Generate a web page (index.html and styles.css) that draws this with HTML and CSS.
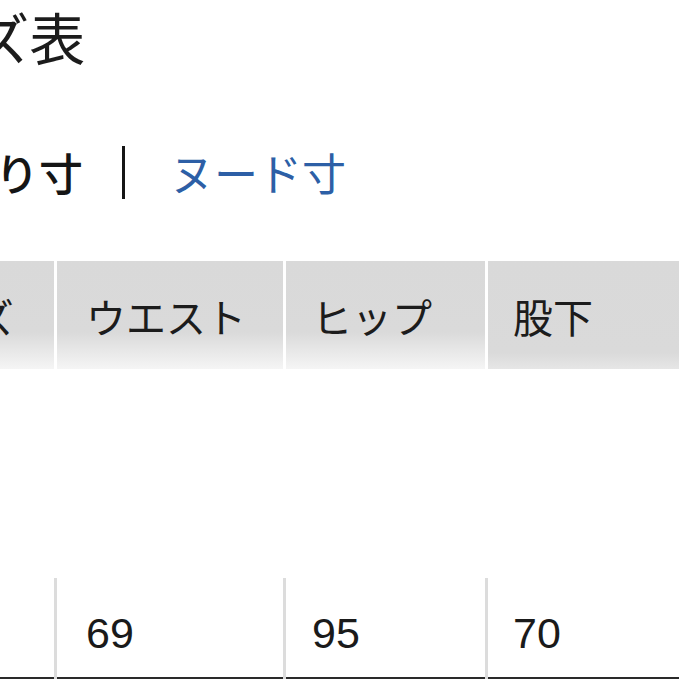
FILE: index.html
```html
<!DOCTYPE html>
<html lang="ja">
<head>
<meta charset="utf-8">
<title>サイズ表</title>
<link rel="stylesheet" href="styles.css">
</head>
<body>
<main class="page">
  <h1 class="title">サイズ表</h1>
  <nav class="tabs">
    <span class="tab tab-active">仕上がり寸</span>
    <span class="tab-sep" aria-hidden="true"></span>
    <a class="tab tab-link" href="#">ヌード寸</a>
  </nav>
  <div class="table">
    <div class="cell head">サイズ</div>
    <div class="cell head">ウエスト</div>
    <div class="cell head col3">ヒップ</div>
    <div class="cell head col4">股下</div>

    <div class="spacer"></div>

    <div class="cell data first"></div>
    <div class="cell data">69</div>
    <div class="cell data col3">95</div>
    <div class="cell data col4">70</div>
  </div>
</main>
</body>
</html>
```

FILE: styles.css
```css
html, body {
  margin: 0;
  padding: 0;
  background: #ffffff;
}
body {
  width: 679px;
  height: 679px;
  overflow: hidden;
  font-family: "Noto Sans CJK JP", "Noto Sans", sans-serif;
  color: #1c1c1c;
}
.page {
  display: flex;
  flex-direction: column;
}
.title {
  margin: 8px 0 0 -137px;
  font-size: 56px;
  line-height: 56px;
  font-weight: 400;
  white-space: nowrap;
}
.tabs {
  margin: 86px 0 0 -137px;
  display: flex;
  align-items: center;
  height: 44px;
  white-space: nowrap;
}
.tab {
  font-size: 44px;
  line-height: 44px;
  text-decoration: none;
}
.tab-active {
  font-weight: 500;
  color: #151515;
}
.tab-sep {
  display: inline-block;
  width: 3px;
  height: 53px;
  background: #151515;
  margin: 0 45px 0 39px;
}
.tab-link {
  color: #2d5fa6;
}
.table {
  margin: 67px 0 0 -134px;
  display: grid;
  grid-template-columns: 188px 226px 199px 240px;
  column-gap: 3px;
}
.cell {
  padding-left: 29px;
  white-space: nowrap;
}
.cell.col3 {
  padding-left: 26px;
}
.cell.col4 {
  padding-left: 25px;
}
.head {
  height: 108px;
  box-sizing: border-box;
  padding-top: 35px;
  font-size: 40px;
  line-height: 40px;
  background: linear-gradient(#d9d9d9 0%, #dadada 66%, #f5f5f5 100%);
}
.head.col4 {
  background: linear-gradient(#d9d9d9 0%, #dadada 85%, #e6e6e6 100%);
}
.spacer {
  grid-column: 1 / -1;
  height: 209px;
}
.data {
  height: 101px;
  box-sizing: border-box;
  padding-top: 34px;
  font-family: "Liberation Sans", Arial, sans-serif;
  font-size: 43px;
  line-height: 43px;
  border-bottom: 2px solid #2a2a2a;
  color: #1a1a1a;
}
.data:not(.first) {
  box-shadow: -3px 0 0 0 #dcdcdc;
}
```
